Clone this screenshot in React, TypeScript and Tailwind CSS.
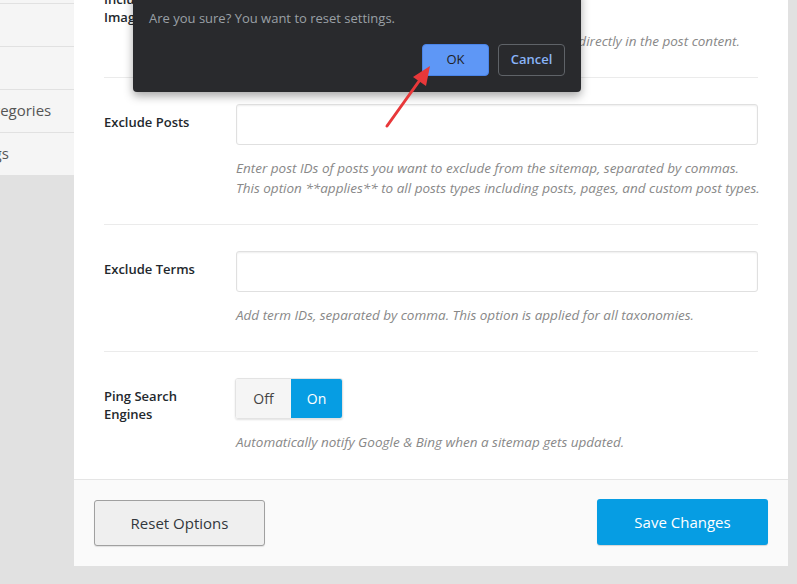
import React from "react";

const font = { fontFamily: '"Open Sans", "Noto Sans", sans-serif' };

const SideItem = ({ label }: { label: string }) => (
  <div className="h-[43px] pb-[2px] border-b border-[#e1e1e1] flex items-center whitespace-nowrap text-[15px] text-[#555]">
    <span className="ml-[-23px]">{label}</span>
  </div>
);

const Row = ({
  label,
  children,
  desc,
  last,
  labelTop = "pt-[9px]",
}: {
  label: React.ReactNode;
  children: React.ReactNode;
  desc: React.ReactNode;
  last?: boolean;
  labelTop?: string;
}) => (
  <div className={`flex pt-[26px] ${last ? "pb-[27px]" : "pb-[26px] border-b border-[#ebebeb]"}`}>
    <div className={`w-[132px] shrink-0 ${labelTop} text-[13px] leading-[18px] font-semibold text-[#23282d]`}>
      {label}
    </div>
    <div className="flex-1 min-w-0">
      {children}
      <div className="mt-[13px] whitespace-nowrap text-[13.5px] leading-[20px] italic text-[#888]">{desc}</div>
    </div>
  </div>
);

const TextInput = () => (
  <div className="h-[41px] w-full rounded-[3px] border border-[#e0e0e0] bg-white shadow-[inset_0_1px_2px_rgba(0,0,0,0.07)]" />
);

const Toggle = () => (
  <div className="flex h-[41px] w-[108px] rounded-[3px] overflow-hidden shadow-[0_1px_2px_rgba(0,0,0,0.12)] border border-[#e3e3e3] ml-[-1px]">
    <div className="w-[55px] flex items-center justify-center bg-[#f5f5f5] text-[14px] text-[#444]">Off</div>
    <div className="flex-1 flex items-center justify-center bg-[#069de3] text-[14px] text-white">On</div>
  </div>
);

export default function App() {
  return (
    <div className="relative w-[797px] h-[584px] overflow-hidden bg-[#e1e1e1] flex items-start" style={font}>
      {/* sidebar */}
      <div className="w-[74px] shrink-0 mt-[-40px] bg-[#f5f5f5]">
        <div className="h-[44px] border-b border-[#e1e1e1]" />
        <SideItem label="" />
        <SideItem label="" />
        <SideItem label="Categories" />
        <SideItem label="Tags" />
      </div>

      {/* main panel */}
      <div className="w-[714px] shrink-0 mt-[-49px] bg-white">
        <div className="px-[30px]">
          <Row
            labelTop="pt-[13px]"
            label={
              <>
                Include
                <br />
                Images
              </>
            }
            desc="Include featured images, images inserted into the post or directly in the post content."
          >
            <Toggle />
          </Row>

          <Row
            label="Exclude Posts"
            desc={
              <>
                Enter post IDs of posts you want to exclude from the sitemap, separated by commas.
                <br />
                This option **applies** to all posts types including posts, pages, and custom post types.
              </>
            }
          >
            <TextInput />
          </Row>

          <Row label="Exclude Terms" desc="Add term IDs, separated by comma. This option is applied for all taxonomies.">
            <TextInput />
          </Row>

          <Row
            last
            label={
              <>
                Ping Search
                <br />
                Engines
              </>
            }
            desc="Automatically notify Google & Bing when a sitemap gets updated."
          >
            <Toggle />
          </Row>
        </div>

        {/* footer */}
        <div className="h-[87px] border-t border-[#e5e5e5] bg-[#fafafa] px-[20px] flex items-center justify-between">
          <button className="w-[171px] h-[46px] rounded-[3px] border border-[#a0a0a0] bg-[#efefef] text-[15px] text-[#32373c] shadow-[0_1px_1px_rgba(0,0,0,0.1)]">
            Reset Options
          </button>
          <button className="w-[171px] h-[46px] mb-[2px] rounded-[3px] bg-[#069de3] text-[15px] text-white shadow-[0_1px_1px_rgba(0,0,0,0.15)]">
            Save Changes
          </button>
        </div>
      </div>

      {/* confirm dialog */}
      <div className="absolute left-[133px] top-[-10px] w-[448px] rounded-b-[4px] bg-[#292a2d] px-[16px] pt-[20px] pb-[16px] shadow-[0_4px_10px_rgba(0,0,0,0.35)]">
        <div className="text-[13px] leading-[16px] text-[#9aa0a6]">Are you sure? You want to reset settings.</div>
        <div className="mt-[18px] flex justify-end gap-[9px]">
          <button className="w-[67px] h-[32px] rounded-[4px] bg-[#5e97f6] border border-[#4a84e8] text-[13px] text-[#202124]">
            OK
          </button>
          <button className="w-[67px] h-[32px] rounded-[4px] border border-[#5f6368] text-[13px] font-semibold text-[#8ab4f8]">
            Cancel
          </button>
        </div>
      </div>

      {/* annotation arrow */}
      <svg className="absolute left-[380px] top-[60px]" width="60" height="75" viewBox="0 0 60 75">
        <line x1="7" y1="66" x2="42" y2="17" stroke="#e8383a" strokeWidth="3" strokeLinecap="round" />
        <polygon points="50,6 33,17 46,26" fill="#e8383a" />
      </svg>
    </div>
  );
}
